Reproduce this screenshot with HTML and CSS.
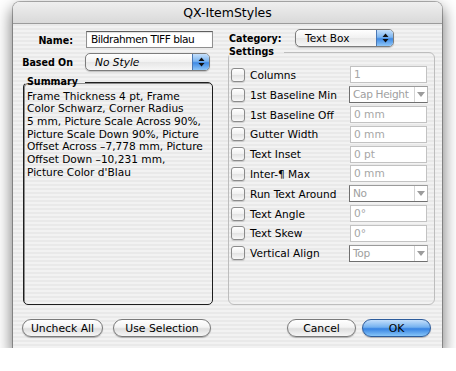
FILE: index.html
```html
<!DOCTYPE html>
<html lang="en">
<head>
    <meta charset="UTF-8">
    <title>QX-ItemStyles</title>
    <link rel="stylesheet" href="styles.css">
</head>
<body>
    <div class="window">
        <div class="titlebar">QX-ItemStyles</div>
        <div class="panes">
            <div class="left">
                <div class="form-row name-row">
                    <span class="label bold">Name:</span>
                    <div class="textfield">Bildrahmen TIFF blau</div>
                </div>
                <div class="form-row based-row">
                    <span class="label bold">Based On</span>
                    <div class="popup based-popup">
                        <span class="popup-text italic">No Style</span>
                        <span class="popup-arrows"><svg width="7" height="10" viewBox="0 0 7 10"><path d="M3.5 0.5 L6.5 4 L0.5 4 Z M0.5 6 L6.5 6 L3.5 9.5 Z" fill="#111"/></svg></span>
                    </div>
                </div>
                <fieldset class="group summary">
                    <legend class="bold">Summary</legend>
                    <p class="summary-text">Frame Thickness 4 pt, Frame<br>Color Schwarz, Corner Radius<br>5 mm, Picture Scale Across 90%,<br>Picture Scale Down 90%, Picture<br>Offset Across –7,778 mm, Picture<br>Offset Down –10,231 mm,<br>Picture Color d'Blau</p>
                </fieldset>
            </div>
            <div class="right">
                <div class="form-row category-row">
                    <span class="category-label bold">Category:</span>
                    <div class="popup category-popup">
                        <span class="popup-text">Text Box</span>
                        <span class="popup-arrows"><svg width="7" height="10" viewBox="0 0 7 10"><path d="M3.5 0.5 L6.5 4 L0.5 4 Z M0.5 6 L6.5 6 L3.5 9.5 Z" fill="#111"/></svg></span>
                    </div>
                </div>
                <fieldset class="group settings">
                    <legend class="bold">Settings</legend>
                    <div class="setting"><span class="check"></span><span class="setting-label">Columns</span><div class="field">1</div></div>
                    <div class="setting"><span class="check"></span><span class="setting-label">1st Baseline Min</span><div class="select"><span class="value">Cap Height</span><span class="drop"></span></div></div>
                    <div class="setting"><span class="check"></span><span class="setting-label">1st Baseline Off</span><div class="field">0 mm</div></div>
                    <div class="setting"><span class="check"></span><span class="setting-label">Gutter Width</span><div class="field">0 mm</div></div>
                    <div class="setting"><span class="check"></span><span class="setting-label">Text Inset</span><div class="field">0 pt</div></div>
                    <div class="setting"><span class="check"></span><span class="setting-label">Inter-¶ Max</span><div class="field">0 mm</div></div>
                    <div class="setting"><span class="check"></span><span class="setting-label">Run Text Around</span><div class="select"><span class="value">No</span><span class="drop"></span></div></div>
                    <div class="setting"><span class="check"></span><span class="setting-label">Text Angle</span><div class="field">0°</div></div>
                    <div class="setting"><span class="check"></span><span class="setting-label">Text Skew</span><div class="field">0°</div></div>
                    <div class="setting"><span class="check"></span><span class="setting-label">Vertical Align</span><div class="select"><span class="value">Top</span><span class="drop"></span></div></div>
                </fieldset>
            </div>
        </div>
        <div class="buttons">
            <div class="button-group">
                <button class="button uncheck">Uncheck All</button>
                <button class="button use-selection">Use Selection</button>
            </div>
            <div class="button-group right-group">
                <button class="button cancel">Cancel</button>
                <button class="button ok">OK</button>
            </div>
        </div>
    </div>
</body>
</html>
```

FILE: styles.css
```css
body {
    margin: 0;
    background-color: #fff;
    font-family: "DejaVu Sans", Verdana, sans-serif;
    font-size: 10.6px;
    color: #000;
}

.bold {
    font-family: "DejaVu Sans Condensed", "DejaVu Sans", sans-serif;
    font-stretch: condensed;
    font-weight: bold;
    white-space: nowrap;
}

.italic {
    font-style: italic;
}

.window {
    width: 429px;
    height: 346px;
    margin: 2px 0 0 13px;
    border-radius: 7px 7px 0 0;
    background: repeating-linear-gradient(#f2f2f2 0 2px, #e9e9e9 2px 4px);
    box-shadow: 0 0 0 1px rgba(0, 0, 0, 0.28), 0 7px 15px 2px rgba(0, 0, 0, 0.5);
}

.titlebar {
    height: 21px;
    line-height: 21px;
    border-bottom: 1px solid #9b9b9b;
    border-radius: 7px 7px 0 0;
    background: linear-gradient(#efefef, #d9d9d9);
    text-align: center;
    font-size: 12.5px;
}

.panes {
    display: flex;
    gap: 15px;
    padding: 0 7px 0 9px;
}

.left {
    width: 191px;
}

.right {
    width: 207px;
}

.form-row {
    display: flex;
    align-items: center;
    height: 17px;
}

.label {
    width: 51px;
    text-align: right;
}

.name-row {
    margin-top: 7px;
}

.based-row {
    margin-top: 5px;
}

.textfield {
    width: 127px;
    height: 17px;
    box-sizing: border-box;
    margin-left: 13px;
    padding-left: 4px;
    line-height: 15px;
    letter-spacing: -0.45px;
    background: #fff;
    border: 1px solid #8f8f8f;
    border-top-color: #5f5f5f;
    box-shadow: inset 0 1px 1px rgba(0, 0, 0, 0.12);
}

.popup {
    display: flex;
    height: 18px;
    box-sizing: border-box;
    border: 1px solid #7c7c7c;
    border-radius: 5px;
    background: linear-gradient(#ffffff, #f1f1f1 50%, #e6e6e6 51%, #f7f7f7);
    box-shadow: 0 1px 1px rgba(0, 0, 0, 0.2);
}

.popup-text {
    flex: 1;
    padding-left: 9px;
    line-height: 16px;
}

.popup-arrows {
    width: 16px;
    display: flex;
    align-items: center;
    justify-content: center;
    border-left: 1px solid #4b78b4;
    border-radius: 0 4px 4px 0;
    background: linear-gradient(#c6e0fb, #7cb5f0 45%, #3f8ae4 55%, #8fc6f7);
}

.based-popup {
    width: 125px;
    margin-left: 12px;
}

.category-row {
    margin-top: 5px;
    height: 18px;
}

.category-label {
    width: 67px;
    padding-left: 1px;
    box-sizing: border-box;
}

.category-popup {
    width: 99px;
}

.group {
    margin: 0;
    box-sizing: border-box;
    min-width: 0;
}

.group legend {
    line-height: 13px;
    padding: 0 0 2px 0;
}

.summary {
    margin: 4.5px 0 0 1px;
    width: 190px;
    height: 230.5px;
    padding: 0 2px;
    border: 1px solid #1e1e1e;
    border-radius: 5px;
    box-shadow: inset 1px 1px 0 #8a8a8a;
}

.summary legend {
    padding-left: 2px;
    padding-right: 7px;
    margin-left: -1px;
}

.summary-text {
    margin: 0;
    padding-left: 1px;
    line-height: 12.7px;
    white-space: nowrap;
}

.settings {
    margin: -2.5px 0 0 0;
    width: 207px;
    height: 260.5px;
    padding: 5.6px 2px 0 2px;
    border: 1px solid #bdbdbd;
    border-radius: 6px;
}

.settings legend {
    margin-left: -2px;
    padding-right: 10px;
}

.setting {
    display: flex;
    align-items: center;
    height: 19.8px;
}

.check {
    width: 14px;
    height: 14px;
    box-sizing: border-box;
    border: 1px solid #8b8b8b;
    border-radius: 3px;
    background: linear-gradient(#ffffff, #f0f0f0 50%, #e2e2e2 51%, #f8f8f8);
    box-shadow: 0 1px 1px rgba(0, 0, 0, 0.15);
}

.setting-label {
    width: 100px;
    margin-left: 5px;
}

.field {
    width: 77px;
    height: 17px;
    box-sizing: border-box;
    padding-left: 3px;
    line-height: 15px;
    background: #fff;
    color: #a6a6a6;
    border: 1px solid #c2c2c2;
}

.select {
    display: flex;
    width: 79px;
    height: 17px;
    margin-left: -1px;
    box-sizing: border-box;
    background: #fff;
    color: #a0a0a0;
    border: 1px solid #6f6f6f;
    border-right-color: #b5b5b5;
    border-top-color: #9a9a9a;
}

.select .value {
    flex: 1;
    padding-left: 3px;
    line-height: 15px;
    letter-spacing: -0.35px;
    white-space: nowrap;
    overflow: hidden;
}

.select .drop {
    width: 12px;
    border-left: 1px solid #d4d4d4;
    position: relative;
}

.select .drop::after {
    content: "";
    position: absolute;
    left: 2px;
    top: 5px;
    border-left: 4px solid transparent;
    border-right: 4px solid transparent;
    border-top: 5px solid #9c9c9c;
}

.buttons {
    display: flex;
    justify-content: space-between;
    margin-top: 14px;
    padding: 0 11px 0 9px;
}

.button-group {
    display: flex;
    gap: 10px;
}

.right-group {
    gap: 6px;
}

.button {
    height: 18px;
    padding: 0;
    font-family: "DejaVu Sans", Verdana, sans-serif;
    font-size: 10.8px;
    color: #000;
    border: 1px solid #7a7a7a;
    border-radius: 9px;
    background: linear-gradient(#ffffff, #f3f3f3 45%, #dedede 55%, #f6f6f6);
    box-shadow: 0 1px 1px rgba(0, 0, 0, 0.25);
}

.uncheck {
    width: 81px;
}

.use-selection {
    width: 98px;
}

.cancel,
.ok {
    width: 69px;
}

.ok {
    border-color: #2d5c9c;
    background: linear-gradient(#c4dffb, #74b1f0 45%, #3783e2 55%, #86c5f8);
}
```
